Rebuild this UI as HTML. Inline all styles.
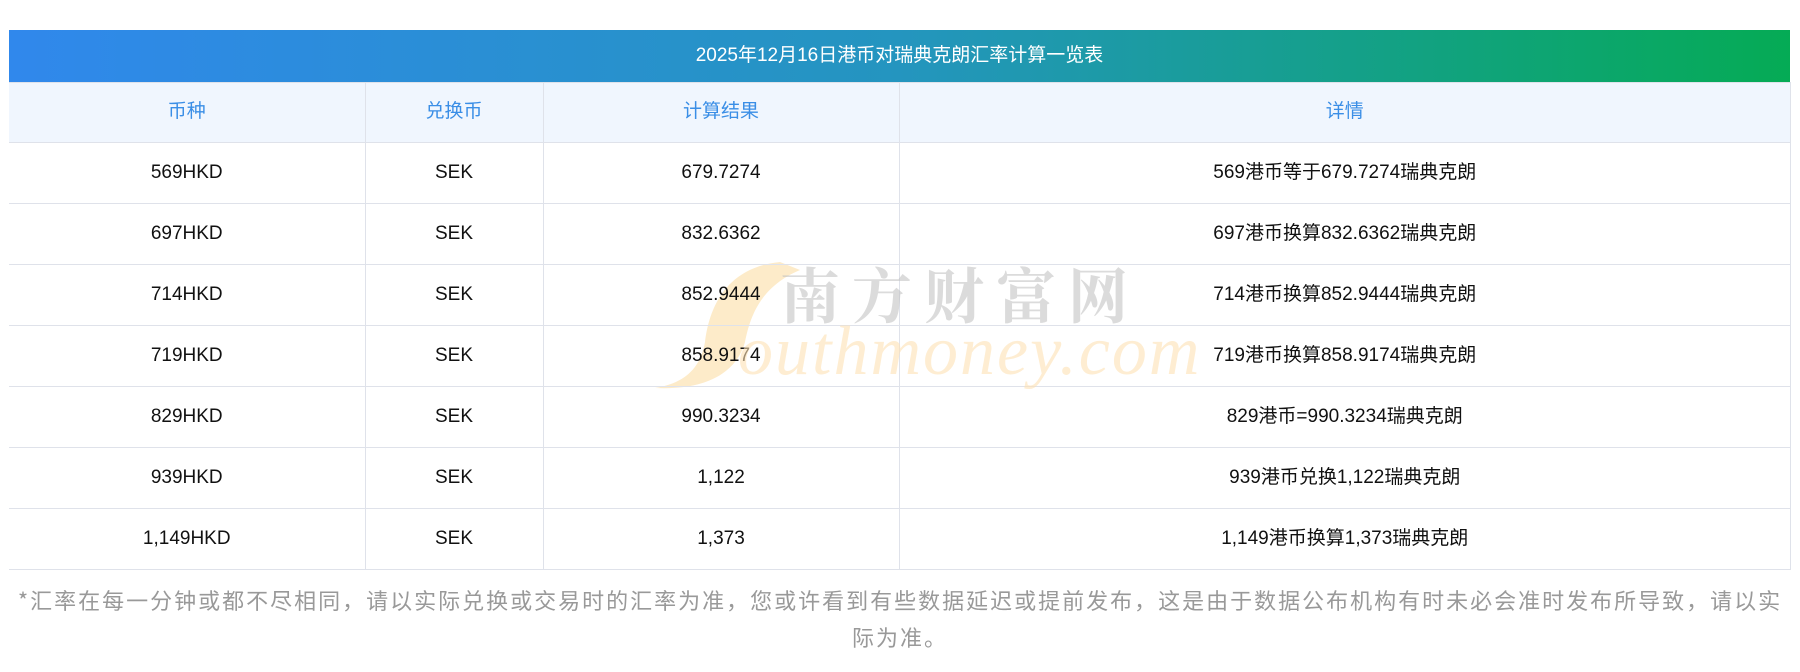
<!DOCTYPE html>
<html><head><meta charset="utf-8"><style>
body{margin:0;width:1800px;height:672px;background:#fff;font-family:"Liberation Sans","Noto Sans CJK SC",sans-serif;position:relative;overflow:hidden}
.title{position:absolute;left:9px;top:30px;width:1781px;height:52px;background:linear-gradient(90deg,#3088ec,#2495bf 50%,#05ab55);color:#fff;font-size:19px;line-height:52px;text-align:center}
table{position:absolute;left:9px;top:82px;width:1782px;border-collapse:collapse;table-layout:fixed}
td,th{border:1px solid #dfe2ea;text-align:center;font-size:19px;color:#111;height:60px;padding:0;font-weight:normal;vertical-align:middle;line-height:24px}
td span,th span{display:inline-block;vertical-align:middle;line-height:24px;height:24px;overflow:visible}
th{background:#f0f6fe;color:#3a8ee6;height:59px}
tr td:first-child,tr th:first-child{border-left:none}
.note{position:absolute;left:14px;top:582px;width:1772px;text-align:center;color:#999;font-size:22px;letter-spacing:2px;line-height:37px;font-family:"Noto Sans CJK SC",sans-serif}
.wm{position:absolute;pointer-events:none;white-space:nowrap}
</style></head><body>
<div class="title">2025年12月16日港币对瑞典克朗汇率计算一览表</div>
<svg class="wm" style="left:650px;top:262px" width="160" height="130"><path d="M130 0 C80 5 60 40 55 80 C50 110 30 122 5 126 C50 128 85 115 95 80 C100 55 110 25 150 8 Z" fill="#fdebc9"/></svg>
<table>
<colgroup><col style="width:356px"><col style="width:178px"><col style="width:356px"><col></colgroup>
<tr><th><span>币种</span></th><th><span>兑换币</span></th><th><span>计算结果</span></th><th><span>详情</span></th></tr>
<tr><td><span>569HKD</span></td><td><span>SEK</span></td><td><span>679.7274</span></td><td><span>569港币等于679.7274瑞典克朗</span></td></tr>
<tr><td><span>697HKD</span></td><td><span>SEK</span></td><td><span>832.6362</span></td><td><span>697港币换算832.6362瑞典克朗</span></td></tr>
<tr><td><span>714HKD</span></td><td><span>SEK</span></td><td><span>852.9444</span></td><td><span>714港币换算852.9444瑞典克朗</span></td></tr>
<tr><td><span>719HKD</span></td><td><span>SEK</span></td><td><span>858.9174</span></td><td><span>719港币换算858.9174瑞典克朗</span></td></tr>
<tr><td><span>829HKD</span></td><td><span>SEK</span></td><td><span>990.3234</span></td><td><span>829港币=990.3234瑞典克朗</span></td></tr>
<tr><td><span>939HKD</span></td><td><span>SEK</span></td><td><span>1,122</span></td><td><span>939港币兑换1,122瑞典克朗</span></td></tr>
<tr><td><span>1,149HKD</span></td><td><span>SEK</span></td><td><span>1,373</span></td><td><span>1,149港币换算1,373瑞典克朗</span></td></tr>
</table>
<div class="wm" style="left:780px;top:258px;font-size:60px;color:rgba(195,195,195,.6);letter-spacing:12px;font-family:'Noto Serif CJK SC',serif;font-weight:bold;line-height:70px">南方财富网</div>
<div class="wm" style="left:738px;top:312px;font-size:70px;color:rgba(253,225,180,.6);font-family:'Liberation Serif',serif;font-style:italic;line-height:80px;letter-spacing:2px">outhmoney.com</div>
<div class="note">*汇率在每一分钟或都不尽相同，请以实际兑换或交易时的汇率为准，您或许看到有些数据延迟或提前发布，这是由于数据公布机构有时未必会准时发布所导致，请以实际为准。</div>
</body></html>
